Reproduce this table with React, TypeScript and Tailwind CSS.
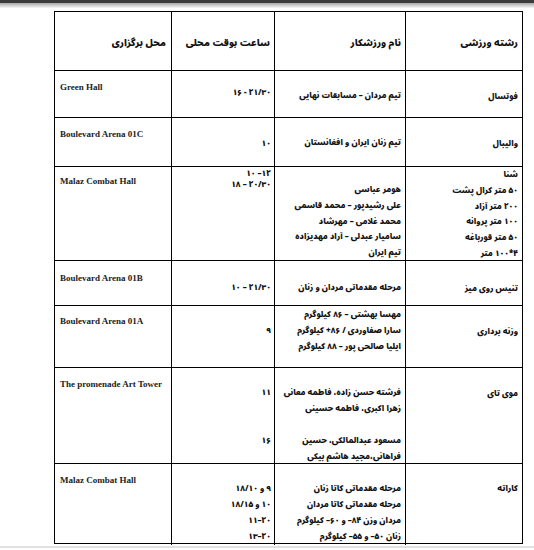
import React from "react";

const fa = "font-['Noto_Sans_Arabic','Noto_Naskh_Arabic','DejaVu_Sans_Condensed','DejaVu_Sans',sans-serif] font-black text-[8px] text-[#111]";
const faH = "font-['Noto_Sans_Arabic','Noto_Naskh_Arabic','DejaVu_Sans_Condensed','DejaVu_Sans',sans-serif] font-black text-[9.5px] text-[#111] whitespace-nowrap";
const en = "font-['Liberation_Serif',serif] font-bold text-[9px] text-[#222] whitespace-nowrap";

function Lines({ items }: { items: string[] }) {
  return (
    <>
      {items.map((t, i) => (
        <div key={i} className="whitespace-nowrap">
          {t === "" ? "\u00a0" : t}
        </div>
      ))}
    </>
  );
}

export default function App() {
  return (
    <div className="w-[534px] h-[550px] bg-white overflow-hidden">
      <div className="h-[3px] bg-[#3c3c3c]" />
      <div className="h-[5px] bg-linear-to-b from-[#a8a8a8] to-[#f7f7f7]" />
      <div className="ml-[54px] mt-[3px] w-[469px] border border-black">
        {/* header */}
        <div className="grid grid-cols-[117px_103px_131px_116px] h-[59px] border-b border-black">
          <div dir="rtl" className={`${faH} border-r border-black pr-[5px] pt-[23px] leading-[16px] text-right`}>محل برگزاری</div>
          <div dir="rtl" className={`${faH} border-r border-black pr-[4px] pt-[23px] leading-[16px] text-right`}>ساعت بوقت محلی</div>
          <div dir="rtl" className={`${faH} border-r border-black pr-[4px] pt-[23px] leading-[16px] text-right`}>نام ورزشکار</div>
          <div dir="rtl" className={`${faH} pr-[4px] pt-[23px] leading-[16px] text-right`}>رشته ورزشی</div>
        </div>

        {/* futsal */}
        <div className="grid grid-cols-[117px_103px_131px_116px] h-[47px] border-b border-black">
          <div className={`${en} border-r border-black pl-[5px] pt-[8px] leading-[16px] text-left`}>Green Hall</div>
          <div dir="ltr" className={`${fa} border-r border-black pr-[3px] pt-[14px] leading-[16px] text-right`}>۱۶ - ۲۱/۳۰</div>
          <div dir="rtl" className={`${fa} border-r border-black pr-[4px] pt-[17px] leading-[16px] text-right whitespace-nowrap`}>تیم مردان – مسابقات نهایی</div>
          <div dir="rtl" className={`${fa} pr-[4px] pt-[18px] leading-[16px] text-right`}>فوتسال</div>
        </div>

        {/* volleyball */}
        <div className="grid grid-cols-[117px_103px_131px_116px] h-[49px] border-b border-black">
          <div className={`${en} border-r border-black pl-[5px] pt-[8px] leading-[16px] text-left`}>Boulevard Arena 01C</div>
          <div dir="ltr" className={`${fa} border-r border-black pr-[3px] pt-[18px] leading-[16px] text-right`}>۱۰</div>
          <div dir="rtl" className={`${fa} border-r border-black pr-[4px] pt-[17px] leading-[16px] text-right whitespace-nowrap`}>تیم زنان ایران و افغانستان</div>
          <div dir="rtl" className={`${fa} pr-[4px] pt-[18px] leading-[16px] text-right`}>والیبال</div>
        </div>

        {/* swimming */}
        <div className="grid grid-cols-[117px_103px_131px_116px] h-[94px] border-b border-black">
          <div className={`${en} border-r border-black pl-[5px] pt-[6px] leading-[16px] text-left`}>Malaz Combat Hall</div>
          <div dir="ltr" className={`${fa} border-r border-black pr-[3px] pt-[2px] leading-[10.5px] text-right`}>
            <Lines items={["۱۰ –۱۲", "۱۸ – ۲۰/۳۰"]} />
          </div>
          <div dir="rtl" className={`${fa} border-r border-black pr-[4px] pt-[15px] leading-[15.8px] text-right`}>
            <Lines items={["هومر عباسی", "علی رشیدپور – محمد قاسمی", "محمد غلامی – مهرشاد", "سامیار عبدلی – آراد مهدیزاده", "تیم ایران"]} />
          </div>
          <div dir="rtl" className={`${fa} pr-[4px] pt-[0px] leading-[15.8px] text-right`}>
            <Lines items={["شنا", "۵۰ متر کرال پشت", "۲۰۰ متر آزاد", "۱۰۰ متر پروانه", "۵۰ متر قورباغه", "۴*۱۰۰ متر"]} />
          </div>
        </div>

        {/* table tennis */}
        <div className="grid grid-cols-[117px_103px_131px_116px] h-[45px] border-b border-black">
          <div className={`${en} border-r border-black pl-[5px] pt-[9px] leading-[16px] text-left`}>Boulevard Arena 01B</div>
          <div dir="ltr" className={`${fa} border-r border-black pr-[3px] pt-[19px] leading-[16px] text-right`}>۱۰ – ۲۱/۳۰</div>
          <div dir="rtl" className={`${fa} border-r border-black pr-[4px] pt-[19px] leading-[16px] text-right whitespace-nowrap`}>مرحله مقدماتی مردان و زنان</div>
          <div dir="rtl" className={`${fa} pr-[4px] pt-[20px] leading-[16px] text-right`}>تنیس روی میز</div>
        </div>

        {/* weightlifting */}
        <div className="grid grid-cols-[117px_103px_131px_116px] h-[62px] border-b border-black">
          <div className={`${en} border-r border-black pl-[5px] pt-[7px] leading-[16px] text-left`}>Boulevard Arena 01A</div>
          <div dir="ltr" className={`${fa} border-r border-black pr-[3px] pt-[17px] leading-[16px] text-right`}>۹</div>
          <div dir="rtl" className={`${fa} border-r border-black pr-[4px] pt-[1px] leading-[16px] text-right`}>
            <Lines items={["مهسا بهشتی – ۸۶ کیلوگرم", "سارا صفاوردی / ۸۶+ کیلوگرم", "ایلیا صالحی پور – ۸۸ کیلوگرم"]} />
          </div>
          <div dir="rtl" className={`${fa} pr-[4px] pt-[18px] leading-[16px] text-right`}>وزنه برداری</div>
        </div>

        {/* muay thai */}
        <div className="grid grid-cols-[117px_103px_131px_116px] h-[96px] border-b border-black">
          <div className={`${en} border-r border-black pl-[5px] pt-[8px] leading-[16px] text-left`}>The promenade Art Tower</div>
          <div dir="ltr" className={`${fa} border-r border-black pr-[3px] pt-[17px] leading-[16px] text-right`}>
            <Lines items={["۱۱", "", "", "۱۶"]} />
          </div>
          <div dir="rtl" className={`${fa} border-r border-black pr-[4px] pt-[17px] leading-[16px] text-right`}>
            <Lines items={["فرشته حسن زاده، فاطمه معانی", "زهرا اکبری، فاطمه حسینی", "", "مسعود عبدالمالکی، حسین", "فراهانی،مجید هاشم بیکی"]} />
          </div>
          <div dir="rtl" className={`${fa} pr-[4px] pt-[18px] leading-[16px] text-right`}>موی تای</div>
        </div>

        {/* karate */}
        <div className="grid grid-cols-[117px_103px_131px_116px] h-[79px]">
          <div className={`${en} border-r border-black pl-[5px] pt-[8px] leading-[16px] text-left`}>Malaz Combat Hall</div>
          <div className={`${fa} border-r border-black pr-[3px] pt-[17px] leading-[16px] text-right`}>
            <div dir="rtl" className="whitespace-nowrap">۹ و ۱۸/۱۰</div>
            <div dir="rtl" className="whitespace-nowrap">۱۰ و ۱۸/۱۵</div>
            <div dir="ltr" className="whitespace-nowrap">۱۱–۲۰</div>
            <div dir="ltr" className="whitespace-nowrap">۱۳–۲۰</div>
          </div>
          <div dir="rtl" className={`${fa} border-r border-black pr-[4px] pt-[17px] leading-[16px] text-right`}>
            <Lines items={["مرحله مقدماتی کاتا زنان", "مرحله مقدماتی کاتا مردان", "مردان وزن ۸۴– و ۶۰– کیلوگرم", "زنان ۵۰– و ۵۵– کیلوگرم"]} />
          </div>
          <div dir="rtl" className={`${fa} pr-[4px] pt-[17px] leading-[16px] text-right`}>کاراته</div>
        </div>
      </div>
      <div className="mt-[2px] h-[2px] bg-[#e0e0e0]" />
    </div>
  );
}
